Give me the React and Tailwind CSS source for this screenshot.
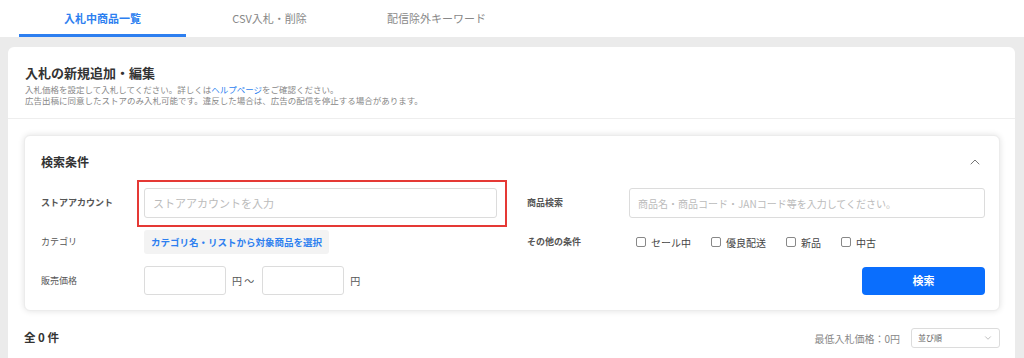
import { ChevronUp, ChevronDown } from "lucide-react";

const font = { fontFamily: '"Noto Sans CJK JP", "Noto Sans", sans-serif' };

function Check({ label }) {
  return (
    <label className="flex items-center gap-[5px] text-[10px] text-[#444]">
      <span className="w-[10px] h-[10px] border border-[#888] rounded-[2px] bg-white" />
      {label}
    </label>
  );
}

export default function App() {
  const tabs = ["入札中商品一覧", "CSV入札・削除", "配信除外キーワード"];

  return (
    <div className="w-[1024px] h-[358px] overflow-hidden bg-[#ebebeb]" style={font}>
      {/* Tabs */}
      <div className="h-[37px] bg-white flex pl-[19px]">
        {tabs.map((t, i) => (
          <div
            key={t}
            className={
              i === 0
                ? "w-[167px] flex items-center justify-center text-[11px] font-bold text-[#2d7ff0] border-b-[3px] border-[#2d7ff0] pt-[2px]"
                : "w-[167px] flex items-center justify-center text-[11px] text-[#888] border-b-[3px] border-transparent pt-[2px]"
            }
          >
            {t}
          </div>
        ))}
      </div>

      {/* Main card */}
      <div className="mt-[10px] ml-[8px] w-[1007px] bg-white rounded-[6px] h-[330px]">
        <div className="px-[17px] pt-[17px] pb-[12px] border-b border-[#eeeeee]">
          <h2 className="text-[13px] font-bold text-[#333] leading-[18px]">入札の新規追加・編集</h2>
          <p className="text-[8.5px] text-[#888] leading-[11px] mt-[2px]">
            入札価格を設定して入札してください。詳しくは
            <span className="text-[#2d7ff0]">ヘルプページ</span>
            をご確認ください。
          </p>
          <p className="text-[8.5px] text-[#888] leading-[11px]">
            広告出稿に同意したストアのみ入札可能です。違反した場合は、広告の配信を停止する場合があります。
          </p>
        </div>

        <div className="px-[16px] pt-[16px]">
          {/* Search conditions */}
          <div className="w-[976px] rounded-[6px] bg-white shadow-[0_0_6px_rgba(0,0,0,0.12)] border border-[#ececec] pl-[16px] pr-[14px] pt-[16px] pb-[15px]">
            <div className="flex items-center justify-between h-[20px]">
              <h3 className="text-[12px] font-bold text-[#333]">検索条件</h3>
              <ChevronUp className="w-[16px] h-[16px] text-[#777] mr-[2px]" strokeWidth={1.5} />
            </div>

            <div className="grid grid-cols-[456px_458px] gap-x-[30px] gap-y-[12px] mt-[16px]">
              {/* Row 1 left */}
              <div className="flex items-center">
                <span className="w-[103px] text-[9px] font-bold text-[#555]">ストアアカウント</span>
                <div className="relative flex-1">
                  <input
                    className="w-[353px] h-[30px] border border-[#dcdcdc] rounded-[3px] px-[8px] text-[11px] outline-none placeholder:text-[#bbb]"
                    placeholder="ストアアカウントを入力"
                    style={font}
                  />
                  <span className="absolute left-[-7px] top-[-8px] w-[370px] h-[47px] border-2 border-[#e53935] pointer-events-none" />
                </div>
              </div>
              {/* Row 1 right */}
              <div className="flex items-center">
                <span className="w-[102px] text-[9px] font-bold text-[#555]">商品検索</span>
                <input
                  className="flex-1 h-[30px] border border-[#dcdcdc] rounded-[3px] px-[8px] text-[10px] outline-none placeholder:text-[#bbb]"
                  placeholder="商品名・商品コード・JANコード等を入力してください。"
                  style={font}
                />
              </div>

              {/* Row 2 left */}
              <div className="flex items-center">
                <span className="w-[103px] text-[9px] text-[#555]">カテゴリ</span>
                <button className="h-[24px] px-[7px] bg-[#f3f3f3] rounded-[3px] text-[9.5px] font-bold text-[#2d7ff0]">
                  カテゴリ名・リストから対象商品を選択
                </button>
              </div>
              {/* Row 2 right */}
              <div className="flex items-center">
                <span className="w-[109px] text-[9px] font-bold text-[#555]">その他の条件</span>
                <div className="flex items-center gap-[20px]">
                  <Check label="セール中" />
                  <Check label="優良配送" />
                  <Check label="新品" />
                  <Check label="中古" />
                </div>
              </div>

              {/* Row 3 left */}
              <div className="flex items-center">
                <span className="w-[103px] text-[9px] text-[#555]">販売価格</span>
                <input className="w-[82px] h-[29px] border border-[#dcdcdc] rounded-[3px]" />
                <span className="text-[10px] text-[#555] ml-[6px] mr-[8px]">円 〜</span>
                <input className="w-[82px] h-[29px] border border-[#dcdcdc] rounded-[3px]" />
                <span className="text-[10px] text-[#555] ml-[6px]">円</span>
              </div>
              {/* Row 3 right */}
              <div className="flex items-center justify-end">
                <button className="w-[123px] h-[28px] bg-[#0a6efd] rounded-[4px] text-white text-[11px] font-bold">
                  検索
                </button>
              </div>
            </div>
          </div>

          {/* Result bar */}
          <div className="flex items-center justify-between mt-[17px] w-[976px]">
            <span className="text-[11.5px] font-bold text-[#333]">全 0 件</span>
            <div className="flex items-center gap-[11px]">
              <span className="text-[10px] text-[#888]">最低入札価格：0円</span>
              <div className="w-[89px] h-[20px] border border-[#dcdcdc] rounded-[3px] flex items-center justify-between px-[6px]">
                <span className="text-[8px] text-[#666]">並び順</span>
                <ChevronDown className="w-[10px] h-[10px] text-[#999]" strokeWidth={1.5} />
              </div>
            </div>
          </div>
        </div>
      </div>
    </div>
  );
}
